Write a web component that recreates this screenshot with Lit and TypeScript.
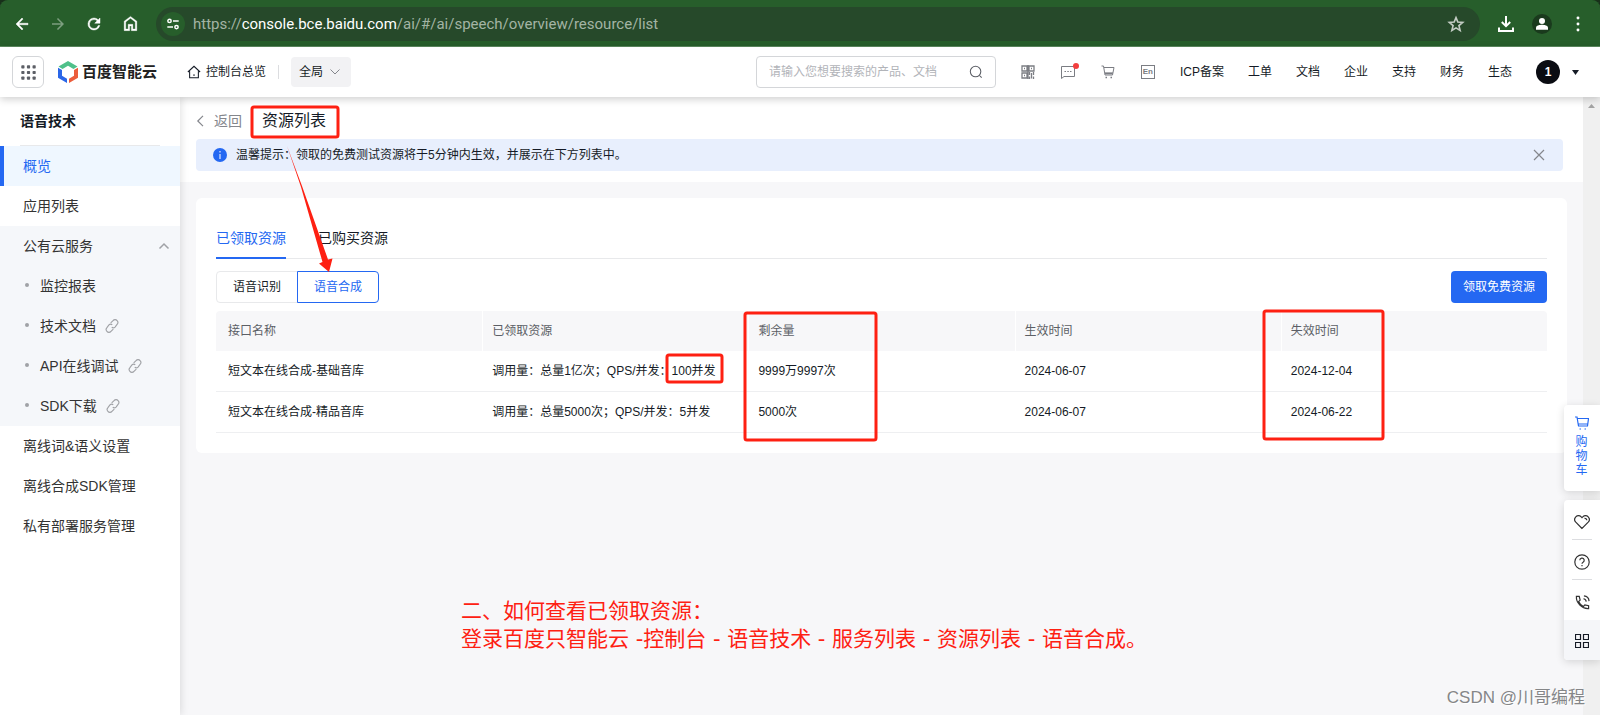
import { LitElement, html, css, svg, nothing } from "lit";
import { customElement, state } from "lit/decorators.js";
import { classMap } from "lit/directives/class-map.js";

const base = css`
  * {
    box-sizing: border-box;
  }
  button,
  input,
  select {
    font: inherit;
    color: inherit;
    margin: 0;
    padding: 0;
    border: 0;
    background: none;
  }
  button {
    cursor: pointer;
  }
  a {
    color: inherit;
    text-decoration: none;
  }
  svg {
    display: block;
    flex: none;
  }
`;

const line = (size: number, body: unknown, view = 16, width = 1) => html`<svg
  width=${size}
  height=${size}
  viewBox="0 0 ${view} ${view}"
  fill="none"
  stroke="currentColor"
  stroke-width=${width}
  aria-hidden="true"
>
  ${body}
</svg>`;

const solid = (size: number, body: unknown) => html`<svg
  width=${size}
  height=${size}
  viewBox="0 0 24 24"
  fill="currentColor"
  aria-hidden="true"
>
  ${body}
</svg>`;

@customElement("browser-bar")
class BrowserBar extends LitElement {
  static styles = [
    base,
    css`
      :host {
        display: block;
        background: #18301a;
      }
      .bar {
        display: flex;
        align-items: center;
        height: 47px;
        padding: 0 4px;
        background: #275e2b;
        box-shadow: inset 0 -1px 0 #5d8b60;
        border-radius: 8px 8px 0 0;
        color: #fff;
      }
      .tool {
        width: 36px;
        height: 36px;
        display: grid;
        place-items: center;
      }
      .dim {
        color: #7d9f80;
      }
      .omnibox {
        flex: 1;
        min-width: 0;
        display: flex;
        align-items: center;
        height: 34px;
        margin: 0 8px;
        padding: 0 13px 0 5px;
        border-radius: 17px;
        background: #26492a;
      }
      .site {
        width: 24px;
        height: 24px;
        margin-right: 8px;
        border-radius: 50%;
        background: #275e2b;
        display: grid;
        place-items: center;
      }
      .url {
        flex: 1;
        min-width: 0;
        overflow: hidden;
        white-space: nowrap;
        font: 15px/24px Roboto, "Open Sans", sans-serif;
        color: #a3b4a4;
      }
      .host {
        color: #fff;
      }
      .star {
        color: #c3ccc4;
      }
      .person {
        width: 20px;
        height: 20px;
        border-radius: 50%;
        background: #1a3a1d;
        display: grid;
        place-items: center;
      }
    `,
  ];

  render() {
    return html`<div class="bar">
      <button class="tool" aria-label="后退">
        ${solid(18, svg`<path d="M20 11H7.8l5.6-5.6L12 4l-8 8 8 8 1.4-1.4L7.8 13H20z" stroke="currentColor" stroke-width=".6"/>`)}
      </button>
      <button class="tool dim" aria-label="前进">
        ${solid(18, svg`<path d="M4 13h12.2l-5.6 5.6L12 20l8-8-8-8-1.4 1.4 5.6 5.6H4z"/>`)}
      </button>
      <button class="tool" aria-label="重新加载">
        ${solid(18, svg`<path d="M17.65 6.35A7.96 7.96 0 0 0 12 4a8 8 0 1 0 7.73 10h-2.08A6 6 0 1 1 12 6c1.66 0 3.14.69 4.22 1.78L13 11h7V4z" stroke="currentColor" stroke-width=".6"/>`)}
      </button>
      <button class="tool" aria-label="主页">
        ${solid(19, svg`<path d="M6 19h3v-6h6v6h3v-9l-6-4.5L6 10zM4 21V9l8-6 8 6v12h-7v-6h-2v6z" stroke="currentColor" stroke-width=".4"/>`)}
      </button>
      <div class="omnibox">
        <button class="site" aria-label="查看网站信息">
          ${line(14, svg`<circle cx="4" cy="4.5" r="1.9"/><path d="M8 4.5h6.5M1.5 11.5H8"/><circle cx="12" cy="11.5" r="1.9"/>`, 16, 1.7)}
        </button>
        <div class="url">https://<span class="host">console.bce.baidu.com</span>/ai/#/ai/speech/overview/resource/list</div>
        <button class="star" aria-label="收藏">
          ${line(22, svg`<path d="M12 5l2 4.900 5.300.400-4.100 3.500 1.300 5.200L12 16.200 7.500 19l1.300-5.200-4.100-3.500 5.300-.4z"/>`, 24, 1.800)}
        </button>
      </div>
      <button class="tool" aria-label="下载">
        ${line(18, svg`<path d="M9 1v10M4.800 7L9 11.200 13.200 7M2 12.500V16h14v-3.500"/>`, 18, 2)}
      </button>
      <button class="tool" aria-label="用户">
        <span class="person">${solid(18, svg`<circle cx="12" cy="8" r="4"/><path d="M4 19.500V17c0-3 5-4 8-4s8 1 8 4v2.500z"/>`)}</span>
      </button>
      <button class="tool" aria-label="菜单">
        ${solid(16, svg`<circle cx="12" cy="3" r="2.200"/><circle cx="12" cy="12" r="2.200"/><circle cx="12" cy="21" r="2.200"/>`)}
      </button>
    </div>`;
  }
}

@customElement("console-header")
class ConsoleHeader extends LitElement {
  static styles = [
    base,
    css`
      :host {
        display: block;
        position: relative;
        z-index: 2;
        background: #fff;
        box-shadow: 0 2px 8px rgba(0, 0, 0, 0.2);
      }
      .head {
        display: flex;
        align-items: center;
        height: 50px;
        padding: 0 21px 0 12px;
        white-space: nowrap;
      }
      .apps {
        width: 32px;
        height: 32px;
        border: 1px solid #d4d6d9;
        border-radius: 6px;
        display: grid;
        place-items: center;
        color: #5c5f66;
      }
      .logo {
        display: flex;
        align-items: center;
        gap: 4px;
        margin-left: 14px;
        font-size: 15px;
        font-weight: 700;
        color: #222;
      }
      .home {
        display: flex;
        align-items: center;
        gap: 5px;
        margin-left: 30px;
        padding-right: 12px;
      }
      .rule {
        width: 1px;
        height: 14px;
        background: #dcdde0;
      }
      .region {
        position: relative;
        margin-left: 12px;
      }
      .region select {
        appearance: none;
        display: block;
        width: 60px;
        height: 30px;
        padding: 0 8px;
        background: #f2f2f4;
        border-radius: 4px;
      }
      .region svg {
        position: absolute;
        right: 11px;
        top: 10px;
        color: #84868c;
        pointer-events: none;
      }
      .search {
        display: flex;
        align-items: center;
        width: 240px;
        height: 32px;
        margin-left: auto;
        padding: 0 12px;
        border: 1px solid #d4d6d9;
        border-radius: 4px;
        color: #5c5f66;
      }
      .search input {
        flex: 1;
        min-width: 0;
        outline: 0;
      }
      .search input::placeholder {
        color: #b2b4b9;
        opacity: 1;
      }
      .icons {
        display: flex;
        gap: 26px;
        margin: 0 25px;
        color: #7b7d83;
      }
      .icons button {
        position: relative;
      }
      .dot {
        position: absolute;
        right: -4px;
        top: -2px;
        width: 6px;
        height: 6px;
        border-radius: 50%;
        background: #f33e3e;
      }
      .en {
        width: 14px;
        height: 14px;
        border: 1px solid #7b7d83;
        font-size: 8px;
        font-weight: 700;
        line-height: 12px;
      }
      .links {
        display: flex;
        gap: 24px;
      }
      .account {
        display: flex;
        align-items: center;
        gap: 12px;
        margin-left: 24px;
      }
      .avatar {
        width: 24px;
        height: 24px;
        border-radius: 50%;
        background: #0a0c12;
        color: #fff;
        font-weight: 700;
        line-height: 24px;
      }
    `,
  ];

  render() {
    const dots = [2, 8, 14].flatMap((y) => [2, 8, 14].map((x) => svg`<rect x=${x - 1.7} y=${y - 1.7} width="3.4" height="3.4" rx=".8"/>`));
    return html`<header class="head">
      <button class="apps" aria-label="全部产品">
        <svg width="15" height="15" viewBox="0 0 16 16" fill="currentColor">${dots}</svg>
      </button>
      <a class="logo" href="#">
        <svg width="20" height="22" viewBox="0 0 20 22" aria-hidden="true">
          <path d="M10 0l9.500 5.400-4 2.500L10 4.700 4.500 7.900l-4-2.500z" fill="#4fc08a" />
          <path d="M0 6.800l4 2.300v5.700l5 2.900V22l-9-5.200z" fill="#2a66e8" />
          <path d="M20 6.800l-4 2.300v5.700l-5 2.900V22l9-5.200z" fill="#ec5d3c" />
        </svg>
        <span>百度智能云</span>
      </a>
      <a class="home" href="#">
        ${line(14, svg`<path d="M1 8L8 1.500 15 8M3 7v7.500h10V7M8 10.500v2"/>`, 16, 1.200)}
        <span>控制台总览</span>
      </a>
      <span class="rule"></span>
      <div class="region">
        <select aria-label="地域">
          <option>全局</option>
        </select>
        ${line(10, svg`<path d="M0.500 2.500L5 7l4.500-4.500"/>`, 10)}
      </div>
      <label class="search">
        <input type="text" aria-label="搜索" placeholder="请输入您想要搜索的产品、文档" />
        ${line(14, svg`<circle cx="7.500" cy="7.500" r="6"/><path d="M12 12l2.500 2.500"/>`, 16, 1.200)}
      </label>
      <div class="icons">
        <button aria-label="二维码">
          ${line(14, svg`<path d="M1 1h5v5H1zM8 1h5v5H8zM1 8h5v5H1zM3 3.500h1M10 3.500h1M3 10.500h1M8.500 7v3M10.500 8v5.500M12.500 7v3M12.500 11.500V14M8.500 11.500V14M7 0v14" stroke-width="1.300"/>`, 14)}
        </button>
        <button aria-label="消息">
          ${line(14, svg`<path d="M.5 1.500h13v10H3l-2.500 2zM3.500 6.500h1.500M6.300 6.500h1.500M9 6.500h1.500"/>`, 14)}<span class="dot"></span>
        </button>
        <button aria-label="购物车">
          ${line(14, svg`<path d="M.5 1h2l1.500 9h7.500l1.500-7.500H3M4 8h8"/><path d="M4 8.500h7.500M4.500 12.500h1.500M9.500 12.500H11" stroke-width="1.600"/>`, 14)}
        </button>
        <button class="en" aria-label="切换语言">En</button>
      </div>
      <nav class="links">
        ${["ICP备案", "工单", "文档", "企业", "支持", "财务", "生态"].map((t) => html`<a href="#">${t}</a>`)}
      </nav>
      <button class="account" aria-label="账号">
        <span class="avatar">1</span>
        <svg width="7" height="5" viewBox="0 0 7 5" fill="currentColor"><path d="M0 0h7L3.500 5z" /></svg>
      </button>
    </header>`;
  }
}

interface Entry {
  text: string;
  link?: boolean;
}

@customElement("side-nav")
class SideNav extends LitElement {
  static styles = [
    base,
    css`
      :host {
        display: block;
        flex: none;
        width: 180px;
        position: relative;
        z-index: 1;
        background: #fff;
        box-shadow: 1px 0 8px rgba(0, 0, 0, 0.12);
        font-size: 14px;
        color: #333;
      }
      .title {
        margin: 0 20px;
        height: 49px;
        border-bottom: 1px solid #e8e9eb;
        font-size: 14px;
        font-weight: 700;
        line-height: 48px;
        color: #151b26;
      }
      .item {
        display: flex;
        align-items: center;
        width: 100%;
        height: 40px;
        padding: 0 10px 0 23px;
      }
      .active {
        background: #eff7ff;
        border-left: 4px solid #2468f2;
        padding-left: 19px;
        color: #2468f2;
      }
      .group {
        background: #f5f7fa;
      }
      .fold {
        justify-content: space-between;
        color: #333;
      }
      .fold svg,
      .link {
        color: #a0a2a6;
      }
      .sub {
        padding-left: 25px;
      }
      .sub::before {
        content: "";
        width: 4px;
        height: 4px;
        margin: 0 11px 2px 0;
        border-radius: 50%;
        background: #a0a2a6;
      }
      .link {
        margin-left: 9px;
      }
    `,
  ];

  private subs: Entry[] = [
    { text: "监控报表" },
    { text: "技术文档", link: true },
    { text: "API在线调试", link: true },
    { text: "SDK下载", link: true },
  ];

  render() {
    return html`<h2 class="title">语音技术</h2>
      <nav>
        <a class="item active" href="#">概览</a>
        <a class="item" href="#">应用列表</a>
        <div class="group">
          <button class="item fold" aria-expanded="true">
            公有云服务 ${line(12, svg`<path d="M1.500 8.500L6 4l4.500 4.500"/>`, 12, 1.500)}
          </button>
          ${this.subs.map(
            (s) => html`<a class="item sub" href="#"
              >${s.text}${s.link
                ? html`<span class="link"
                    >${line(14, svg`<path d="M6.500 4.500L9.200 1.900a2.900 2.900 0 0 1 4.600 0 3 3 0 0 1 .2 4L11.500 9.200a2.800 2.800 0 0 1-3.800.3M9.500 11.500l-2.700 2.600a2.900 2.900 0 0 1-4.600 0 3 3 0 0 1-.2-4L4.500 6.800a2.800 2.800 0 0 1 3.800-.3"/>`, 16, 1.300)}</span
                  >`
                : nothing}</a
            >`
          )}
        </div>
        ${["离线词&语义设置", "离线合成SDK管理", "私有部署服务管理"].map((t) => html`<a class="item" href="#">${t}</a>`)}
      </nav>`;
  }
}

@customElement("resource-page")
class ResourcePage extends LitElement {
  static styles = [
    base,
    css`
      :host {
        display: block;
        flex: 1;
        min-width: 0;
        background: #f7f7f9;
      }
      .top {
        background: #fff;
        padding: 0 20px 11px 16px;
      }
      .crumb {
        display: flex;
        align-items: center;
        height: 42px;
        padding-top: 6px;
      }
      .back {
        display: flex;
        align-items: center;
        gap: 6px;
        margin-right: 20px;
        font-size: 14px;
        color: #84868c;
      }
      .name {
        margin: 0;
        font-size: 16px;
        line-height: 24px;
        font-weight: 400;
        color: #151b26;
      }
      .tip {
        display: flex;
        align-items: center;
        height: 32px;
        padding: 0 18px 0 17px;
        border-radius: 4px;
        background: #e8effd;
      }
      .tip p {
        flex: 1;
        margin: 0 0 0 9px;
      }
      .close {
        color: #84868c;
      }
      .card {
        margin: 16px;
        padding: 20px;
        border-radius: 6px;
        background: #fff;
      }
      .tabs {
        display: flex;
        gap: 32px;
        height: 41px;
        border-bottom: 1px solid #e8e9eb;
      }
      .tab {
        height: 41px;
        font-size: 14px;
        border-bottom: 2px solid transparent;
      }
      .tab.on {
        color: #2468f2;
        border-color: #2468f2;
      }
      .actions {
        display: flex;
        justify-content: space-between;
        margin: 12px 0 8px;
      }
      .kinds {
        display: flex;
        margin: 0;
        padding: 0;
        border: 0;
      }
      .kind {
        position: relative;
      }
      .kind + .kind {
        margin-left: -1px;
      }
      .kind input {
        position: absolute;
        inset: 0;
        opacity: 0;
      }
      .kind span {
        display: block;
        height: 32px;
        padding: 0 16px;
        border: 1px solid #e8e9eb;
        border-radius: 4px 0 0 4px;
        line-height: 30px;
      }
      .kind + .kind span {
        border-radius: 0 4px 4px 0;
      }
      .kind input:checked + span {
        position: relative;
        color: #2468f2;
        border-color: #2468f2;
      }
      .primary {
        height: 32px;
        padding: 0 12px;
        border-radius: 4px;
        background: #2468f2;
        color: #fff;
      }
      .grid {
        width: 100%;
        border-collapse: separate;
        border-spacing: 0;
        table-layout: fixed;
        text-align: left;
      }
      th {
        height: 40px;
        padding: 0 9px;
        background: #f7f7f9;
        border-left: 1px solid #fff;
        font-weight: 400;
        color: #5c5f66;
      }
      td {
        height: 41px;
        padding: 0 10px;
        border-bottom: 1px solid #eeeff1;
        white-space: nowrap;
      }
      th:first-child {
        padding-left: 12px;
        border-left: 0;
        border-radius: 4px 0 0 0;
      }
      th:last-child {
        border-radius: 0 4px 0 0;
      }
      td:first-child {
        padding-left: 12px;
      }
    `,
  ];

  @state() private tab = 0;

  private rows = [
    ["短文本在线合成-基础音库", "调用量：总量1亿次；QPS/并发：100并发", "9999万9997次", "2024-06-07", "2024-12-04"],
    ["短文本在线合成-精品音库", "调用量：总量5000次；QPS/并发：5并发", "5000次", "2024-06-07", "2024-06-22"],
  ];

  render() {
    return html`<div class="top">
        <div class="crumb">
          <a class="back" href="#">${line(12, svg`<path d="M7 .8L1.800 6 7 11.200"/>`, 12, 1.200)}返回</a>
          <h1 class="name">资源列表</h1>
        </div>
        <div class="tip">
          <svg width="14" height="14" viewBox="0 0 14 14" aria-hidden="true">
            <circle cx="7" cy="7" r="7" fill="#2468f2" />
            <path d="M7 3v1.500M7 6v5" stroke="#dfe8fd" stroke-width="1.200" />
          </svg>
          <p>温馨提示：领取的免费测试资源将于5分钟内生效，并展示在下方列表中。</p>
          <button class="close" aria-label="关闭">${line(12, svg`<path d="M1 1l10 10M11 1L1 11"/>`, 12, 1.200)}</button>
        </div>
      </div>
      <section class="card">
        <div class="tabs" role="tablist">
          ${["已领取资源", "已购买资源"].map(
            (t, i) => html`<button
              role="tab"
              class=${classMap({ tab: true, on: i === this.tab })}
              aria-selected=${i === this.tab}
              @click=${() => (this.tab = i)}
            >
              ${t}
            </button>`
          )}
        </div>
        <div class="actions">
          <fieldset class="kinds" aria-label="服务类型">
            <label class="kind"><input type="radio" name="kind" /><span>语音识别</span></label>
            <label class="kind"><input type="radio" name="kind" checked /><span>语音合成</span></label>
          </fieldset>
          <button class="primary">领取免费资源</button>
        </div>
        <table class="grid">
          <thead>
            <tr>
              ${["接口名称", "已领取资源", "剩余量", "生效时间", "失效时间"].map((h) => html`<th scope="col">${h}</th>`)}
            </tr>
          </thead>
          <tbody>
            ${this.rows.map((r) => html`<tr>${r.map((c) => html`<td>${c}</td>`)}</tr>`)}
          </tbody>
        </table>
      </section>`;
  }
}

@customElement("float-tools")
class FloatTools extends LitElement {
  static styles = [
    base,
    css`
      :host {
        display: grid;
        gap: 9px;
        width: 36px;
        color: #333;
      }
      .panel {
        display: grid;
        border-radius: 4px 0 0 4px;
        background: #fff;
        box-shadow: 0 2px 8px rgba(0, 0, 0, 0.14);
        overflow: hidden;
      }
      .cart {
        display: grid;
        align-content: start;
        justify-items: center;
        gap: 5px;
        height: 86px;
        padding: 11px 11px 0 10px;
        color: #2468f2;
        line-height: 14px;
      }
      .tool {
        height: 40px;
        padding-top: 5px;
        display: grid;
        place-items: center;
      }
      .ruled {
        margin: 0 8px;
        border-bottom: 1px solid #dcdde0;
      }
      .last {
        padding-top: 2px;
        background: #f5f6f9;
        color: #151b26;
      }
    `,
  ];

  render() {
    return html`<div class="panel">
        <button class="cart">
          ${line(14, svg`<path d="M0 1h2l1.500 9h9L13.500 2.500H2.300M3.300 8h9.500M4.500 13h1.500M9.500 13H11" />`, 14, 1.200)}
          <span>购物车</span>
        </button>
      </div>
      <div class="panel">
        <button class="tool ruled" aria-label="收藏">
          ${line(16, svg`<path d="M8 14.500L1.800 8.200a4 4 0 0 1 0-5.400 3.800 3.800 0 0 1 5.400 0l.8.8.8-.8a3.800 3.800 0 0 1 5.400 0 4 4 0 0 1 0 5.400zM10.500 4.300a2 2 0 0 1 2.300 2"/>`, 16, 1.200)}
        </button>
        <button class="tool ruled" aria-label="帮助">
          ${line(16, svg`<circle cx="8" cy="8" r="7.200"/><path d="M5.800 6.300a2.200 2.200 0 1 1 3.300 1.900C8.300 8.700 8 9 8 9.800M8 11v1.200"/>`, 16, 1.200)}
        </button>
        <button class="tool" aria-label="电话">
          ${line(15, svg`<path d="M1.500 1.500h3l1 4-1.700 1.500c1 2.300 2.900 4.200 5.200 5.200l1.500-1.700 4 1v3C7.500 15 1 8.500 1.500 1.500zM9 4a3.500 3.500 0 0 1 3 3M9.500 1A6 6 0 0 1 15 6.500"/>`, 16, 1.300)}
        </button>
        <button class="tool last" aria-label="更多">
          ${line(14, svg`<path d="M.5 .5h5v5h-5zM8.500 .5h5v5h-5zM.5 8.500h5v5h-5zM8.500 8.500h5v5h-5z"/>`, 14, 1.200)}
        </button>
      </div>`;
  }
}

@customElement("app-root")
class AppRoot extends LitElement {
  static styles = [
    base,
    css`
      :host {
        display: flex;
        flex-direction: column;
        position: relative;
        min-height: 100vh;
        overflow: hidden;
        font: 12px/20px "Liberation Sans", "Noto Sans CJK SC", sans-serif;
        color: #151b26;
        background: #f7f7f9;
      }
      .body {
        flex: 1;
        display: flex;
      }
      .scroll {
        flex: none;
        width: 17px;
        padding: 7px 0 0 5px;
        background: #f0f0f0;
        color: #a3a3a3;
      }
      .float {
        position: absolute;
        right: 0;
        top: 405px;
        z-index: 2;
      }
      .marks {
        position: absolute;
        left: 0;
        top: 0;
        z-index: 3;
        pointer-events: none;
      }
      .note {
        position: absolute;
        left: 461px;
        top: 597px;
        z-index: 3;
        margin: 0;
        font-family: "DejaVu Sans", "Noto Sans CJK SC", sans-serif;
        font-size: 21px;
        line-height: 28px;
        white-space: nowrap;
        color: #fe2012;
      }
      .credit {
        position: absolute;
        right: 15px;
        bottom: 5px;
        z-index: 3;
        font-size: 17px;
        line-height: 24px;
        color: #858688;
        text-shadow: 1px 1px 0 #fff;
      }
    `,
  ];

  private boxes = [
    [252, 107, 86, 30],
    [667, 355, 55, 27],
    [745, 313, 131, 127],
    [1264, 311, 119, 128],
  ];

  render() {
    return html`<browser-bar></browser-bar>
      <console-header></console-header>
      <div class="body">
        <side-nav></side-nav>
        <resource-page></resource-page>
        <div class="scroll">
          <svg width="7" height="4" viewBox="0 0 7 4" fill="currentColor"><path d="M3.500 0L7 4H0z" /></svg>
        </div>
      </div>
      <float-tools class="float"></float-tools>
      <svg class="marks" width="1600" height="715" aria-hidden="true">
        ${this.boxes.map(
          ([x, y, w, h]) => svg`<rect x=${x} y=${y} width=${w} height=${h} rx="2" fill="none" stroke="#fe2012" stroke-width="3"/>`
        )}
        <path d="M287 146L302 186L328 259.500L332.500 258.500L329 272L319 263.500L322.500 262L301 187Z" fill="#fe2012" />
      </svg>
      <p class="note">二、如何查看已领取资源：<br />登录百度只智能云 -控制台 - 语音技术 - 服务列表 - 资源列表 - 语音合成。</p>
      <div class="credit">CSDN @川哥编程</div>`;
  }
}
